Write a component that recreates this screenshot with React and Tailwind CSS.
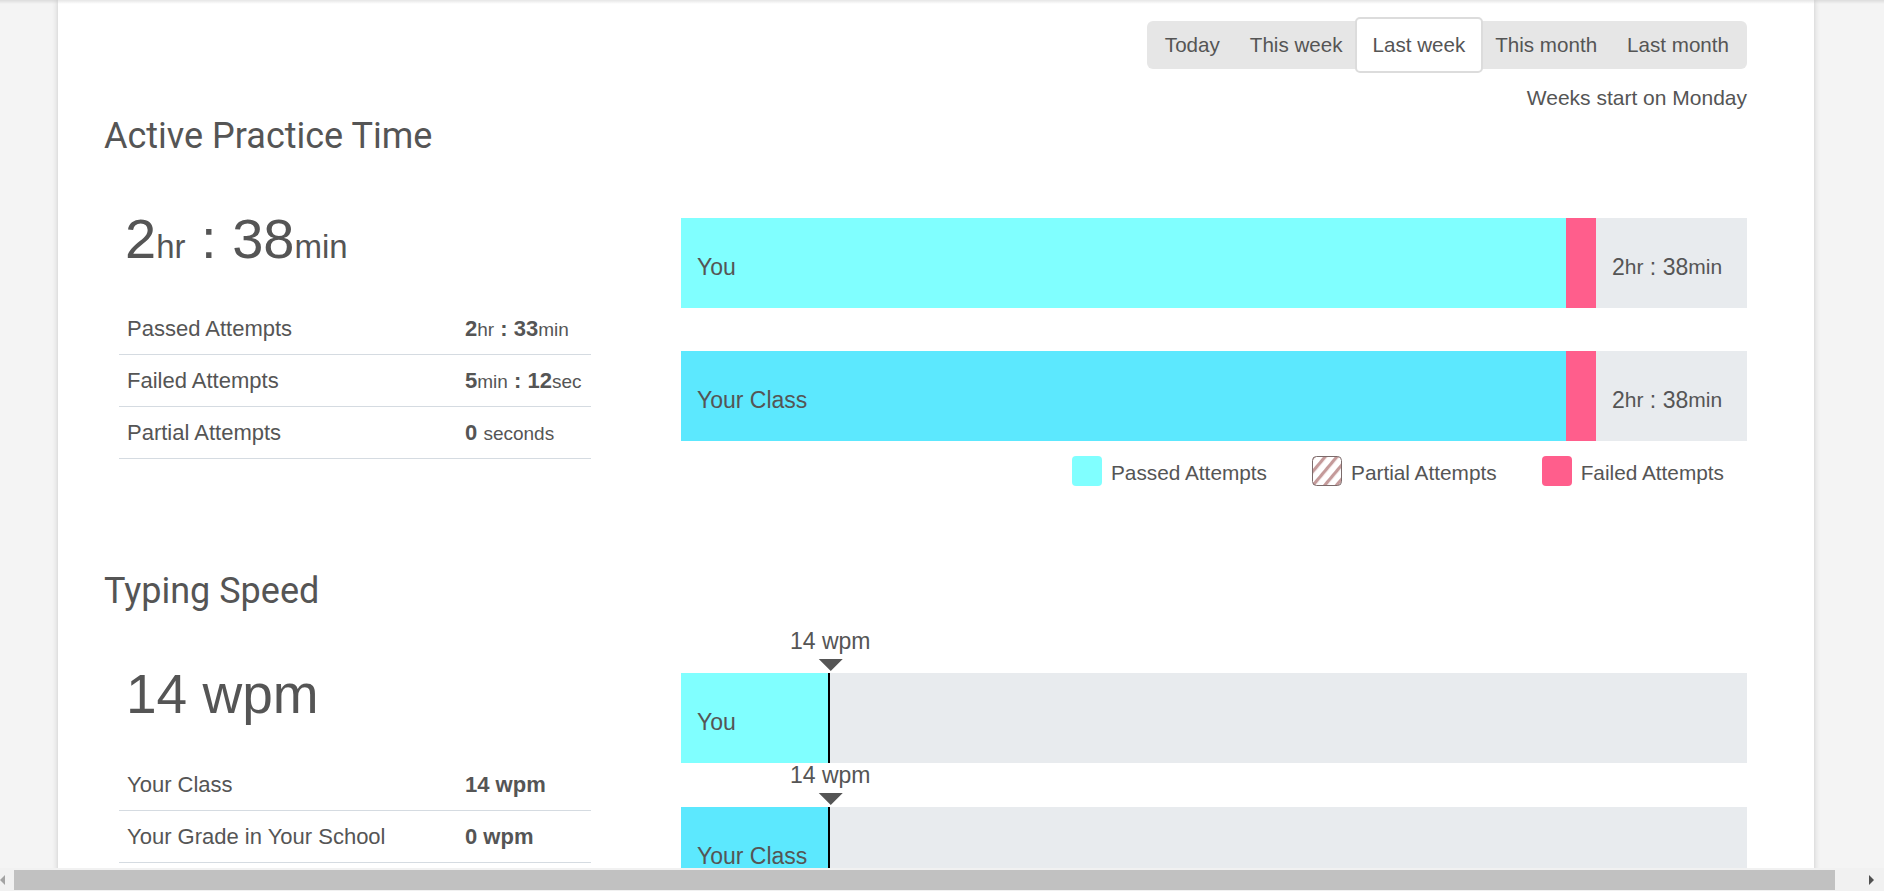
import React from 'react';

const ranges = ['Today', 'This week', 'Last week', 'This month', 'Last month'];

// one row of the small stats table under the big number
function StatRow({ label, children }) {
  return (
    <div className="flex h-[52px] items-center border-b border-[#d5dbe1] text-[22px]">
      <div className="w-[346px] pl-[8px]">{label}</div>
      <div className="whitespace-nowrap">{children}</div>
    </div>
  );
}

function TimeBar({ label, passedClass }) {
  return (
    <div className="flex h-[90px] text-[23px]">
      <div className={`flex w-[885px] items-center pl-[16px] pt-[8px] ${passedClass}`}>{label}</div>
      <div className="w-[30px] bg-[#ff5e8c]" />
      <div className="flex flex-1 items-center bg-[#e8ebee] pl-[16px] pt-[8px] whitespace-nowrap">
        2<span className="text-[21px]">hr</span>&nbsp;:&nbsp;38<span className="text-[21px]">min</span>
      </div>
    </div>
  );
}

// speed scale goes from 0 to 100 wpm
function SpeedBar({ label, wpm, fillClass }) {
  return (
    <div>
      <div className="relative h-[44px]">
        <div className="absolute top-0 flex -translate-x-1/2 flex-col items-center" style={{ left: `${wpm}%` }}>
          <div className="whitespace-nowrap text-[23px] leading-[24px]">{wpm} wpm</div>
          <div className="mt-[6px] h-0 w-0 border-x-[12px] border-t-[12px] border-x-transparent border-t-[#555]" />
        </div>
      </div>
      <div className="flex h-[90px] bg-[#e8ebee] text-[23px]">
        <div
          className={`flex items-center whitespace-nowrap border-r-2 border-black pl-[16px] pt-[8px] ${fillClass}`}
          style={{ width: `${wpm}%` }}
        >
          {label}
        </div>
      </div>
    </div>
  );
}

function Legend() {
  return (
    <div className="mt-[14px] flex items-center justify-end gap-[45px] pr-[23px] text-[20.8px]">
      <div className="flex items-center gap-[9px]">
        <span className="h-[30px] w-[30px] rounded-[4px] bg-[#80ffff]" />
        <span className="translate-y-[2px]">Passed Attempts</span>
      </div>
      <div className="flex items-center gap-[9px]">
        <svg width="30" height="30" viewBox="0 0 30 30">
          <defs>
            <pattern id="hatch" width="9" height="9" patternUnits="userSpaceOnUse" patternTransform="rotate(40)">
              <rect width="3.2" height="9" fill="#c49a9a" />
            </pattern>
          </defs>
          <rect x="0.5" y="0.5" width="29" height="29" rx="4" fill="#fff" />
          <rect x="0.5" y="0.5" width="29" height="29" rx="4" fill="url(#hatch)" stroke="#7b6b6b" />
        </svg>
        <span className="translate-y-[2px]">Partial Attempts</span>
      </div>
      <div className="flex items-center gap-[9px]">
        <span className="h-[30px] w-[30px] rounded-[4px] bg-[#ff5e8c]" />
        <span className="translate-y-[2px]">Failed Attempts</span>
      </div>
    </div>
  );
}

export default function App() {
  return (
    <div className="relative h-[891px] overflow-hidden bg-[#f4f4f4] font-['Liberation_Sans',Arial,sans-serif] text-[#555]">
      <div className="ml-[58px] h-[891px] w-[1756px] bg-white pl-[46px] pr-[67px] pt-[21px] shadow-[0_0_6px_rgba(0,0,0,0.18)]">
        {/* date range switch */}
        <div className="flex justify-end">
          <div className="flex h-[48px] items-center rounded-[6px] bg-[#e6e6e6] px-[3px] text-[20.6px]">
            {ranges.map((r) =>
              r === 'Last week' ? (
                <button
                  key={r}
                  className="-mx-[3px] h-[56px] rounded-[5px] border-2 border-[#dcdcdc] bg-white px-[16px] text-[#555]"
                >
                  {r}
                </button>
              ) : (
                <button key={r} className="h-[42px] px-[15px] text-[#555]">
                  {r}
                </button>
              )
            )}
          </div>
        </div>
        <div className="mt-[17px] text-right text-[21px] leading-[24px]">Weeks start on Monday</div>

        {/* Active Practice Time */}
        <h2 className="mt-[5px] font-['Roboto',sans-serif] text-[36px] leading-[42px]">Active Practice Time</h2>
        <div className="flex items-start">
          <div className="ml-[15px] w-[472px]">
            <div className="mt-[50px] whitespace-nowrap pl-[6px] text-[56px] leading-[64px]">
              2<span className="text-[33px] leading-none">hr</span> : 38<span className="text-[33px] leading-none">min</span>
            </div>
            <div className="mt-[32px]">
              <StatRow label="Passed Attempts">
                <b>2</b><span className="text-[19px]">hr</span><b> : 33</b><span className="text-[19px]">min</span>
              </StatRow>
              <StatRow label="Failed Attempts">
                <b>5</b><span className="text-[19px]">min</span><b> : 12</b><span className="text-[19px]">sec</span>
              </StatRow>
              <StatRow label="Partial Attempts">
                <b>0</b> <span className="text-[19px]">seconds</span>
              </StatRow>
            </div>
          </div>
          <div className="ml-[90px] mt-[61px] w-[1066px]">
            <TimeBar label="You" passedClass="bg-[#80ffff]" />
            <div className="mt-[43px]">
              <TimeBar label="Your Class" passedClass="bg-[#5ce8fe]" />
            </div>
            <Legend />
          </div>
        </div>

        {/* Typing Speed */}
        <h2 className="mt-[84px] font-['Roboto',sans-serif] text-[36px] leading-[42px]">Typing Speed</h2>
        <div className="flex items-start">
          <div className="ml-[15px] w-[472px]">
            <div className="mt-[50px] whitespace-nowrap pl-[7px] text-[55px] leading-[64px]">14 wpm</div>
            <div className="mt-[33px]">
              <StatRow label="Your Class">
                <b>14 wpm</b>
              </StatRow>
              <StatRow label="Your Grade in Your School">
                <b>0 wpm</b>
              </StatRow>
            </div>
          </div>
          <div className="ml-[90px] mt-[17px] w-[1066px]">
            <SpeedBar label="You" wpm={14} fillClass="bg-[#80ffff]" />
            <SpeedBar label="Your Class" wpm={14} fillClass="bg-[#5ce8fe]" />
          </div>
        </div>
      </div>

      {/* faint shadow along the top edge */}
      <div className="pointer-events-none absolute inset-x-0 top-0 h-[4px] bg-gradient-to-b from-black/10 to-transparent" />

      {/* horizontal scrollbar */}
      <div className="absolute inset-x-0 bottom-0 flex h-[23px] items-center bg-[#f1f1f1]">
        <div className="ml-[0px] h-0 w-0 border-y-[5px] border-r-[5px] border-y-transparent border-r-[#a3a3a3]" />
        <div className="ml-[9px] h-[20px] w-[1821px] bg-[#c1c1c1]" />
        <div className="ml-[34px] h-0 w-0 border-y-[5px] border-l-[5px] border-y-transparent border-l-[#505050]" />
      </div>
    </div>
  );
}
